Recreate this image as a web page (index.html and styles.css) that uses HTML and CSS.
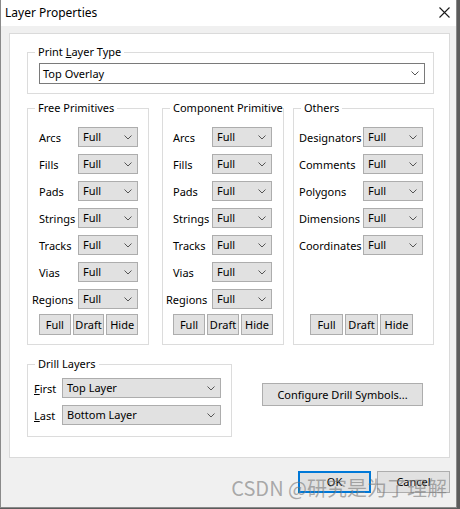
FILE: index.html
```html
<!DOCTYPE html>
<html>
<head>
<meta charset="utf-8">
<title>Layer Properties</title>
<link rel="stylesheet" href="styles.css">
</head>
<body>
<div class="window">
  <div class="titlebar">
    <span class="title">Layer Properties</span>
    <svg class="close" width="11" height="11" viewBox="0 0 11 11"><path d="M0.5 0.5L10.5 10.5M10.5 0.5L0.5 10.5" stroke="#1a1a1a" stroke-width="1.1" fill="none"/></svg>
  </div>
  <div class="panel">
    <fieldset class="group print">
      <legend>Print <u>L</u>ayer Type</legend>
      <div class="combo white wide"><span>Top Overlay</span><svg class="chev" width="8" height="5" viewBox="0 0 8 5"><path d="M0.5 0.5L4 4L7.5 0.5" stroke="#555" fill="none"/></svg></div>
    </fieldset>

    <div class="groups">
      <fieldset class="group prim free">
        <legend>Free Primitives</legend>
        <div class="rows">
          <span class="label">Arcs</span><div class="combo"><span>Full</span><svg class="chev" width="8" height="5" viewBox="0 0 8 5"><path d="M0.5 0.5L4 4L7.5 0.5" stroke="#555" fill="none"/></svg></div>
          <span class="label">Fills</span><div class="combo"><span>Full</span><svg class="chev" width="8" height="5" viewBox="0 0 8 5"><path d="M0.5 0.5L4 4L7.5 0.5" stroke="#555" fill="none"/></svg></div>
          <span class="label">Pads</span><div class="combo"><span>Full</span><svg class="chev" width="8" height="5" viewBox="0 0 8 5"><path d="M0.5 0.5L4 4L7.5 0.5" stroke="#555" fill="none"/></svg></div>
          <span class="label">Strings</span><div class="combo"><span>Full</span><svg class="chev" width="8" height="5" viewBox="0 0 8 5"><path d="M0.5 0.5L4 4L7.5 0.5" stroke="#555" fill="none"/></svg></div>
          <span class="label">Tracks</span><div class="combo"><span>Full</span><svg class="chev" width="8" height="5" viewBox="0 0 8 5"><path d="M0.5 0.5L4 4L7.5 0.5" stroke="#555" fill="none"/></svg></div>
          <span class="label">Vias</span><div class="combo"><span>Full</span><svg class="chev" width="8" height="5" viewBox="0 0 8 5"><path d="M0.5 0.5L4 4L7.5 0.5" stroke="#555" fill="none"/></svg></div>
          <span class="label shift">Regions</span><div class="combo"><span>Full</span><svg class="chev" width="8" height="5" viewBox="0 0 8 5"><path d="M0.5 0.5L4 4L7.5 0.5" stroke="#555" fill="none"/></svg></div>
        </div>
        <div class="btns"><button class="btn small">Full</button><button class="btn small">Draft</button><button class="btn small">Hide</button></div>
      </fieldset>

      <fieldset class="group prim comp">
        <legend>Component Primitives</legend>
        <div class="rows">
          <span class="label">Arcs</span><div class="combo"><span>Full</span><svg class="chev" width="8" height="5" viewBox="0 0 8 5"><path d="M0.5 0.5L4 4L7.5 0.5" stroke="#555" fill="none"/></svg></div>
          <span class="label">Fills</span><div class="combo"><span>Full</span><svg class="chev" width="8" height="5" viewBox="0 0 8 5"><path d="M0.5 0.5L4 4L7.5 0.5" stroke="#555" fill="none"/></svg></div>
          <span class="label">Pads</span><div class="combo"><span>Full</span><svg class="chev" width="8" height="5" viewBox="0 0 8 5"><path d="M0.5 0.5L4 4L7.5 0.5" stroke="#555" fill="none"/></svg></div>
          <span class="label">Strings</span><div class="combo"><span>Full</span><svg class="chev" width="8" height="5" viewBox="0 0 8 5"><path d="M0.5 0.5L4 4L7.5 0.5" stroke="#555" fill="none"/></svg></div>
          <span class="label">Tracks</span><div class="combo"><span>Full</span><svg class="chev" width="8" height="5" viewBox="0 0 8 5"><path d="M0.5 0.5L4 4L7.5 0.5" stroke="#555" fill="none"/></svg></div>
          <span class="label">Vias</span><div class="combo"><span>Full</span><svg class="chev" width="8" height="5" viewBox="0 0 8 5"><path d="M0.5 0.5L4 4L7.5 0.5" stroke="#555" fill="none"/></svg></div>
          <span class="label shift">Regions</span><div class="combo"><span>Full</span><svg class="chev" width="8" height="5" viewBox="0 0 8 5"><path d="M0.5 0.5L4 4L7.5 0.5" stroke="#555" fill="none"/></svg></div>
        </div>
        <div class="btns"><button class="btn small">Full</button><button class="btn small">Draft</button><button class="btn small">Hide</button></div>
      </fieldset>

      <fieldset class="group prim others">
        <legend>Others</legend>
        <div class="rows">
          <span class="label">Designators</span><div class="combo"><span>Full</span><svg class="chev" width="8" height="5" viewBox="0 0 8 5"><path d="M0.5 0.5L4 4L7.5 0.5" stroke="#555" fill="none"/></svg></div>
          <span class="label">Comments</span><div class="combo"><span>Full</span><svg class="chev" width="8" height="5" viewBox="0 0 8 5"><path d="M0.5 0.5L4 4L7.5 0.5" stroke="#555" fill="none"/></svg></div>
          <span class="label">Polygons</span><div class="combo"><span>Full</span><svg class="chev" width="8" height="5" viewBox="0 0 8 5"><path d="M0.5 0.5L4 4L7.5 0.5" stroke="#555" fill="none"/></svg></div>
          <span class="label">Dimensions</span><div class="combo"><span>Full</span><svg class="chev" width="8" height="5" viewBox="0 0 8 5"><path d="M0.5 0.5L4 4L7.5 0.5" stroke="#555" fill="none"/></svg></div>
          <span class="label">Coordinates</span><div class="combo"><span>Full</span><svg class="chev" width="8" height="5" viewBox="0 0 8 5"><path d="M0.5 0.5L4 4L7.5 0.5" stroke="#555" fill="none"/></svg></div>
        </div>
        <div class="btns"><button class="btn small">Full</button><button class="btn small">Draft</button><button class="btn small">Hide</button></div>
      </fieldset>
    </div>

    <div class="drill-row">
      <fieldset class="group drill">
        <legend>Drill Layers</legend>
        <div class="drill-rows">
          <span class="label"><u>F</u>irst</span><div class="combo"><span>Top Layer</span><svg class="chev" width="8" height="5" viewBox="0 0 8 5"><path d="M0.5 0.5L4 4L7.5 0.5" stroke="#555" fill="none"/></svg></div>
          <span class="label"><u>L</u>ast</span><div class="combo"><span>Bottom Layer</span><svg class="chev" width="8" height="5" viewBox="0 0 8 5"><path d="M0.5 0.5L4 4L7.5 0.5" stroke="#555" fill="none"/></svg></div>
        </div>
      </fieldset>
      <button class="btn config">Configure Drill Symbols...</button>
    </div>
  </div>

  <div class="footer">
    <button class="btn dlg default">OK</button>
    <button class="btn dlg">Cancel</button>
  </div>

  <div class="watermark">CSDN @研究是为了理解</div>
</div>
</body>
</html>
```

FILE: styles.css
```css
* { box-sizing: border-box; }

html, body {
  margin: 0;
  padding: 0;
}

body {
  width: 460px;
  height: 509px;
  background: #5c5c5c;
  font-family: "Noto Sans", "Open Sans", sans-serif;
  font-size: 11px;
  color: #000;
  overflow: hidden;
}

.window {
  position: relative;
  width: 457px;
  height: 508px;
  background: #f0f0f0;
  border-left: 1px solid #8a8a8a;
  border-right: 1px solid #8a8a8a;
  border-bottom: 1px solid #8a8a8a;
}

.titlebar {
  height: 26px;
  background: #fff;
  display: flex;
  align-items: center;
  justify-content: space-between;
  padding: 0 6px 0 4px;
}

.title {
  font-size: 12px;
  line-height: 16px;
  padding-bottom: 1px;
}

.close { display: block; margin-top: -1px; }

.panel {
  width: 441px;
  height: 425px;
  margin: 7px 6px 0 8px;
  background: #fff;
  border: 1px solid #dadada;
  padding: 10px 15px 0 17px;
}

.group {
  margin: 0;
  border: 1px solid #dcdcdc;
  min-width: 0;
}

.group legend {
  font-size: 11px;
  line-height: 16px;
  padding: 0 3px;
  white-space: nowrap;
}

/* Print Layer Type */
.print {
  padding: 3px 8px 9px 11px;
}
.print legend { margin-left: -4px; }

/* combo boxes */
.combo {
  height: 20px;
  width: 60px;
  background: #e1e1e1;
  border: 1px solid #adadad;
  display: flex;
  align-items: center;
  justify-content: space-between;
  padding: 0 5px 0 4px;
  line-height: 14px;
  white-space: nowrap;
}
.combo.white {
  background: #fff;
  border-color: #7a7a7a;
  height: 21px;
  width: auto;
  padding-left: 3px;
}
.chev { display: block; flex: none; }

/* primitives groups */
.groups {
  display: flex;
  margin-top: 6px;
}

.prim {
  display: flex;
  flex-direction: column;
  padding-top: 11px;
  padding-bottom: 9px;
}
.free { width: 122px; margin-right: 13px; padding-left: 11px; padding-right: 10px; }
.free legend { margin-left: -4px; }
.comp { width: 122px; margin-right: 9px; padding-left: 10px; padding-right: 10px; }
.comp legend { margin-left: -3px; max-width: 113px; overflow: hidden; padding-right: 0; }
.others { width: 141px; padding-left: 5px; padding-right: 9px; }
.others legend { margin-left: 2px; }

.rows {
  display: grid;
  grid-template-columns: 39px 60px;
  row-gap: 7px;
  align-items: center;
}
.others .rows { grid-template-columns: 64px 60px; }

.label {
  white-space: nowrap;
  line-height: 14px;
  padding-top: 2px;
}
.label.shift { margin-left: -7px; }

.btns {
  margin-top: auto;
  display: flex;
  justify-content: center;
  gap: 2px;
  padding-top: 5px;
}

.btn {
  font-family: inherit;
  font-size: 11px;
  color: #000;
  background: #e1e1e1;
  border: 1px solid #adadad;
  border-radius: 0;
  margin: 0;
  padding: 0;
  display: flex;
  align-items: center;
  justify-content: center;
  line-height: 14px;
}
.btn.small { width: 33px; height: 21px; }

/* drill row */
.drill-row {
  display: flex;
  align-items: flex-start;
  margin-top: 11px;
}
.drill {
  width: 205px;
  padding: 6px 10px 11px 6px;
}
.drill legend { margin-left: 1px; }

.drill-rows {
  display: grid;
  grid-template-columns: 28px 159px;
  row-gap: 7px;
  align-items: center;
}
.drill .combo { width: 159px; }

.config {
  width: 161px;
  height: 23px;
  margin-left: 30px;
  margin-top: 27px;
}

/* footer */
.footer {
  display: flex;
  justify-content: flex-end;
  gap: 6px;
  padding-right: 6px;
  margin-top: 13px;
}
.btn.dlg { width: 73px; height: 22px; }
.btn.default { border: 2px solid #0078d7; }

.watermark {
  position: absolute;
  right: 9px;
  top: 476px;
  font-family: "Noto Sans CJK SC", "Noto Sans", sans-serif;
  font-size: 20px;
  line-height: 24px;
  color: rgba(120, 120, 120, 0.6);
  white-space: nowrap;
  pointer-events: none;
}
```
